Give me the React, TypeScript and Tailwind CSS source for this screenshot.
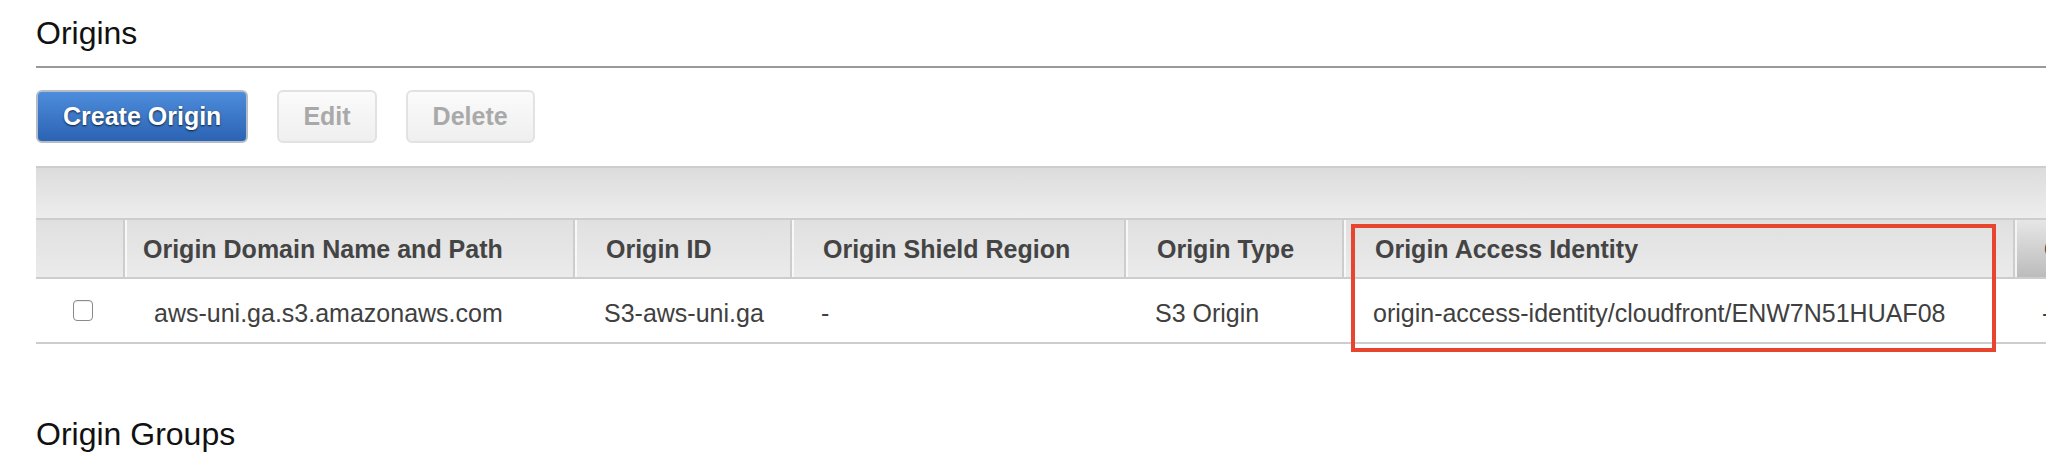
const font = "font-['Liberation_Sans','Helvetica',Arial,sans-serif]"

type Col = { title: string; value: string; headPad: string; cellPad: string }

const cols: Col[] = [
  { title: 'Origin Domain Name and Path', value: 'aws-uni.ga.s3.amazonaws.com', headPad: 'pl-[18px]', cellPad: 'pl-[31px]' },
  { title: 'Origin ID', value: 'S3-aws-uni.ga', headPad: 'pl-[31px]', cellPad: 'pl-[31px]' },
  { title: 'Origin Shield Region', value: '-', headPad: 'pl-[31px]', cellPad: 'pl-[31px]' },
  { title: 'Origin Type', value: 'S3 Origin', headPad: 'pl-[31px]', cellPad: 'pl-[31px]' },
  { title: 'Origin Access Identity', value: 'origin-access-identity/cloudfront/ENW7N51HUAF08', headPad: 'pl-[31px]', cellPad: 'pl-[31px]' },
]

function Heading({ children, line }: { children: string; line?: boolean }) {
  return (
    <div className={line ? 'pt-[15px] pb-[15px] border-b-2 border-[#999]' : ''}>
      <h2 className="text-[32px] leading-[36px] text-[#111] font-normal">{children}</h2>
    </div>
  )
}

function Toolbar() {
  return (
    <div className="flex gap-[29px] mt-[22px]">
      <button className="h-[53px] px-[25px] rounded-[6px] border-2 border-[#b4bcc8] bg-gradient-to-b from-[#4d8ddc] to-[#2c63b3] text-white font-bold text-[25px] [text-shadow:0_1px_2px_rgba(0,0,0,0.75)]">
        Create Origin
      </button>
      <button className="h-[53px] px-[24px] rounded-[6px] border-2 border-[#e2e2e2] bg-gradient-to-b from-[#fbfbfb] to-[#efefef] text-[#a9a9a9] font-bold text-[25px]">
        Edit
      </button>
      <button className="h-[53px] px-[25px] rounded-[6px] border-2 border-[#e2e2e2] bg-gradient-to-b from-[#fbfbfb] to-[#efefef] text-[#a9a9a9] font-bold text-[25px]">
        Delete
      </button>
    </div>
  )
}

function OriginsTable() {
  const grid = 'grid grid-cols-[87px_450px_217px_334px_218px_671px_1fr]'
  return (
    <div className="relative mt-[23px] overflow-hidden">
      <div className="border-t-2 border-[#cdcdcd] h-[52px] bg-gradient-to-b from-[#dcdcdc] to-[#ededed]" />
      <div className={`${grid} border-t-2 border-b-2 border-[#cdcdcd] h-[61px]`}>
        <div className="bg-gradient-to-b from-[#e0e0e0] to-[#ebebeb]" />
        {cols.map((c) => (
          <div
            key={c.title}
            className={`${c.headPad} pt-[14px] border-l-2 border-[#cdcdcd] shadow-[inset_2px_0_0_#f8f8f8] bg-gradient-to-b from-[#e0e0e0] to-[#ebebeb] text-[25px] leading-[30px] font-bold text-[#444] whitespace-nowrap`}
          >
            {c.title}
          </div>
        ))}
        <div className="pl-[29px] pt-[14px] border-l-2 border-[#cdcdcd] shadow-[inset_2px_0_0_#f4f4f4] bg-gradient-to-b from-[#e6e6e6] to-[#bcbcbc] text-[25px] leading-[30px] font-bold text-[#444] whitespace-nowrap">
          Origin Protocol Policy
        </div>
      </div>
      <div className={`${grid} border-b-2 border-[#cdcdcd] h-[65px] text-[25px] leading-[30px] text-[#404040]`}>
        <div className="flex justify-center pl-[6px] pt-[21px]">
          <span className="w-[20px] h-[21px] rounded-[4px] border border-[#8a8a8a] bg-white shadow-[inset_0_1px_1px_rgba(0,0,0,0.08)]" />
        </div>
        {cols.map((c) => (
          <div key={c.title} className={`${c.cellPad} pt-[19px] whitespace-nowrap`}>
            {c.value}
          </div>
        ))}
        <div className="pl-[29px] pt-[19px] whitespace-nowrap">-</div>
      </div>
    </div>
  )
}

export default function App() {
  return (
    <div className={`${font} relative bg-white w-[2046px] h-[456px] overflow-hidden pl-[36px]`}>
      <Heading line>Origins</Heading>
      <Toolbar />
      <OriginsTable />
      <div className="mt-[72px]">
        <Heading>Origin Groups</Heading>
      </div>
      {/* annotation box around the OAI column */}
      <div className="absolute left-[1351px] top-[224px] w-[645px] h-[128px] border-4 border-[#e8452f]" />
    </div>
  )
}
